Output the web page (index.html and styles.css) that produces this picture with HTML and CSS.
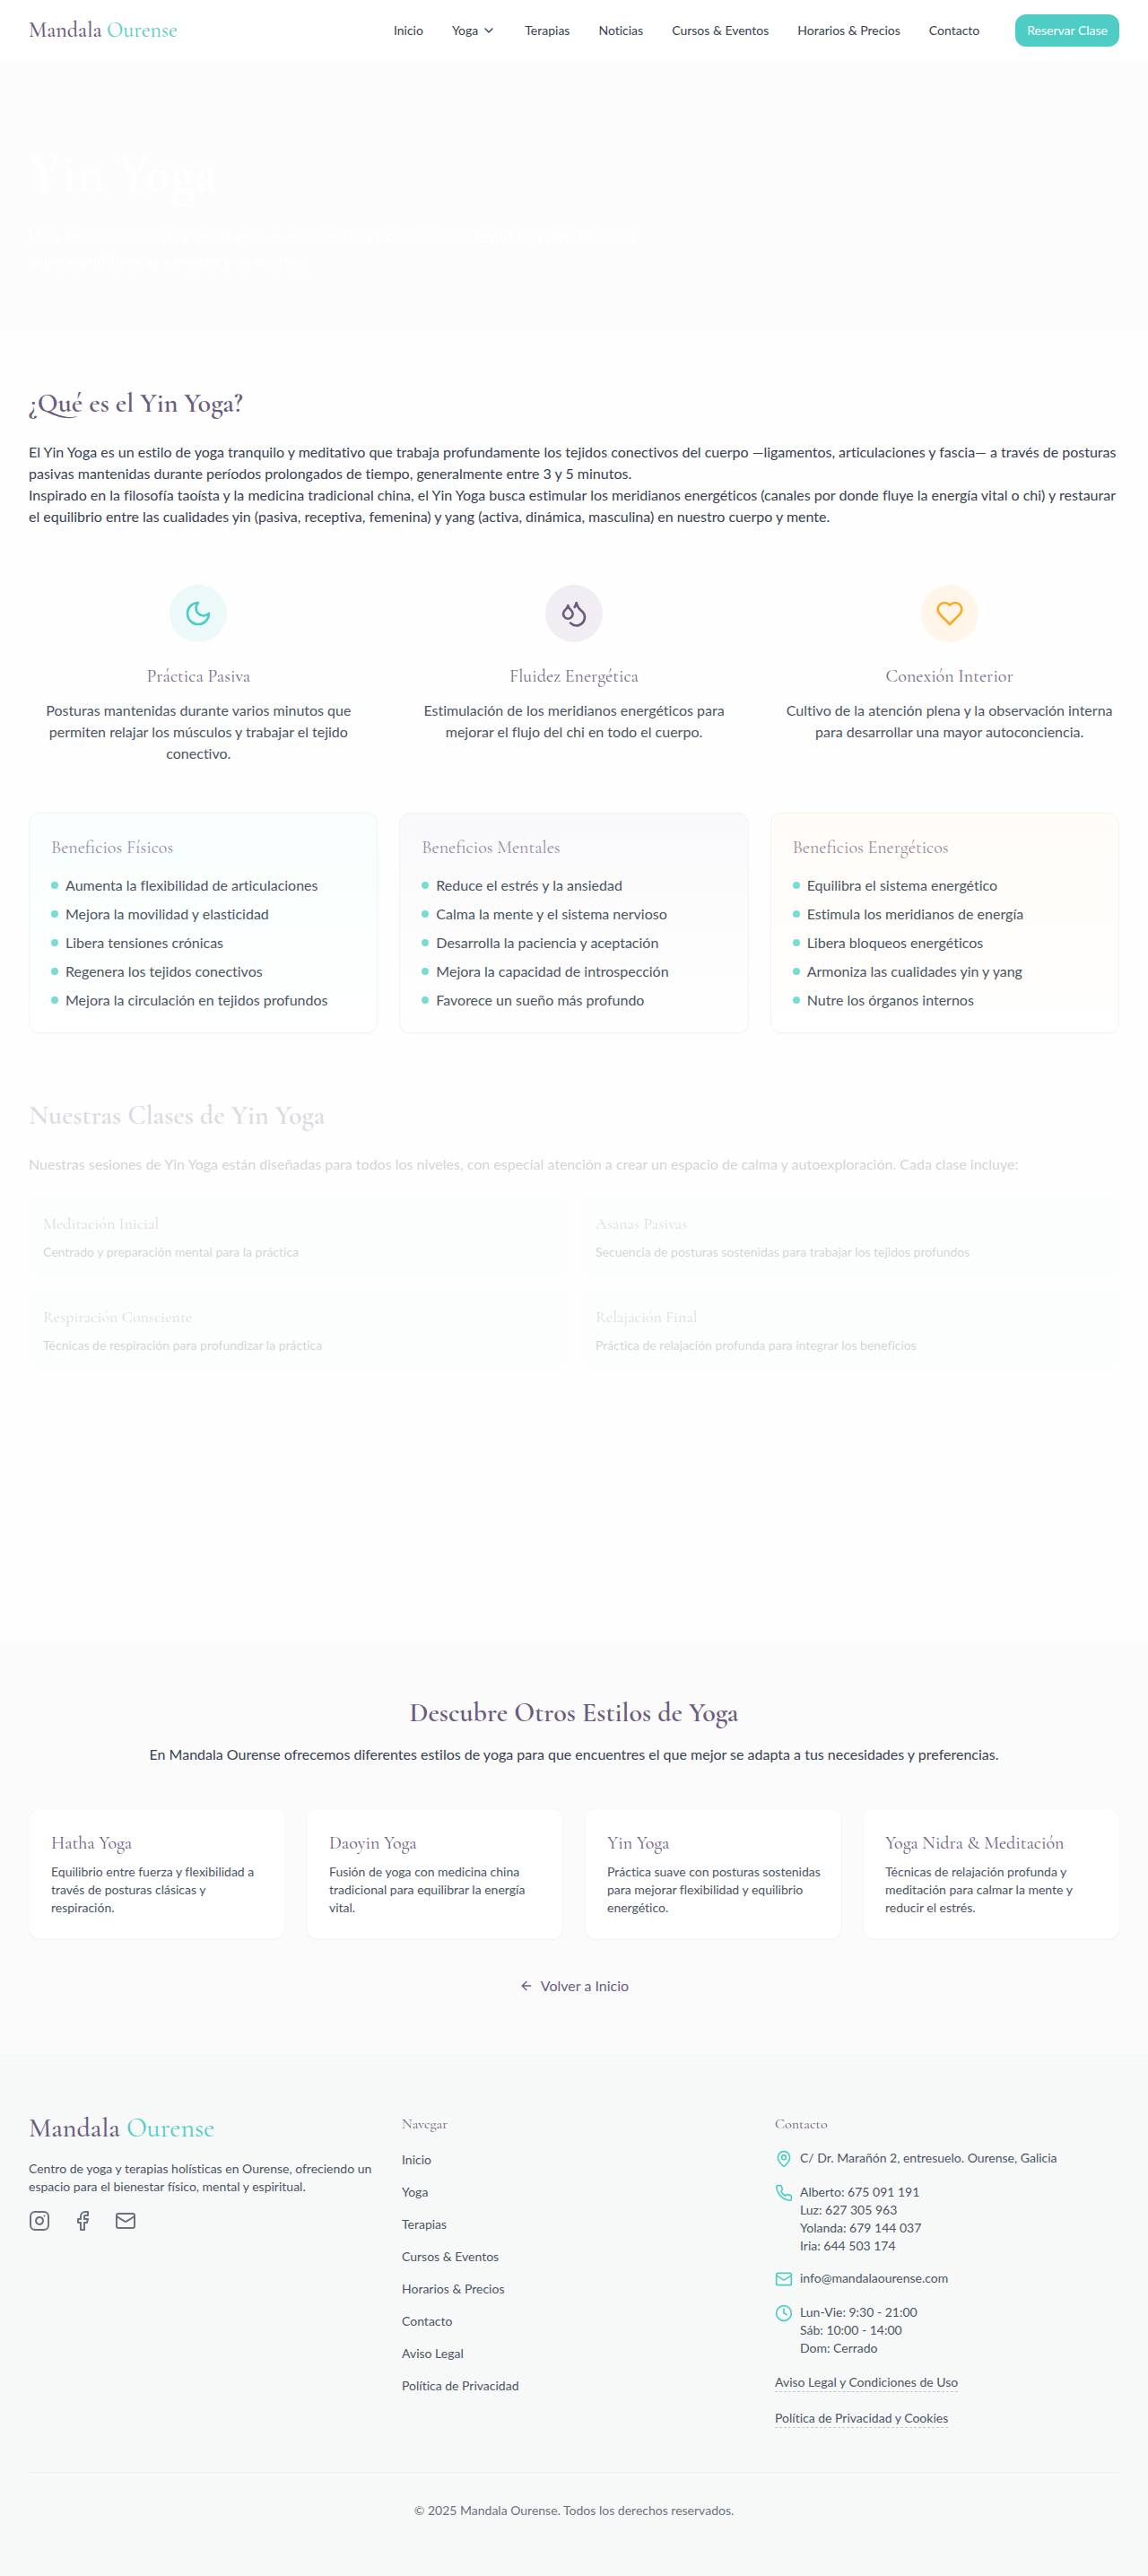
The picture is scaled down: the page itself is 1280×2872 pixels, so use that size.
FILE: index.html
```html
<!DOCTYPE html>
<html lang="es">
<head>
<meta charset="utf-8">
<meta name="viewport" content="width=device-width, initial-scale=1">
<title>Yin Yoga | Mandala Ourense</title>
<link rel="stylesheet" href="styles.css">
</head>
<body>
<header class="site-header">
  <a class="logo" href="#"><span class="logo-main">Mandala</span> <span class="logo-accent">Ourense</span></a>
  <nav class="main-nav" aria-label="Principal">
    <a href="#">Inicio</a>
    <button class="nav-toggle" type="button">Yoga
      <svg class="icon icon-sm" viewBox="0 0 24 24"><path d="m6 9 6 6 6-6"/></svg>
    </button>
    <a href="#">Terapias</a>
    <a href="#">Noticias</a>
    <a href="#">Cursos &amp; Eventos</a>
    <a href="#">Horarios &amp; Precios</a>
    <a href="#">Contacto</a>
    <button class="cta" type="button">Reservar Clase</button>
  </nav>
</header>

<main>
  <section class="hero">
    <h1>Yin Yoga</h1>
    <p>Una práctica suave y profunda que combina posturas sostenidas y meditación para equilibrar el cuerpo y la mente.</p>
  </section>

  <section class="about">
    <h2>¿Qué es el Yin Yoga?</h2>
    <p>El Yin Yoga es un estilo de yoga tranquilo y meditativo que trabaja profundamente los tejidos conectivos del cuerpo —ligamentos, articulaciones y fascia— a través de posturas pasivas mantenidas durante períodos prolongados de tiempo, generalmente entre 3 y 5 minutos.</p>
    <p>Inspirado en la filosofía taoísta y la medicina tradicional china, el Yin Yoga busca estimular los meridianos energéticos (canales por donde fluye la energía vital o chi) y restaurar el equilibrio entre las cualidades yin (pasiva, receptiva, femenina) y yang (activa, dinámica, masculina) en nuestro cuerpo y mente.</p>

    <div class="features">
      <div class="feature">
        <div class="feature-icon teal"><svg class="icon icon-lg" viewBox="0 0 24 24"><path d="M12 3a6 6 0 0 0 9 9 9 9 0 1 1-9-9Z"/></svg></div>
        <h3>Práctica Pasiva</h3>
        <p>Posturas mantenidas durante varios minutos que permiten relajar los músculos y trabajar el tejido conectivo.</p>
      </div>
      <div class="feature">
        <div class="feature-icon purple"><svg class="icon icon-lg" viewBox="0 0 24 24"><path d="M7 16.300c2.200 0 4-1.830 4-4.050 0-1.160-.57-2.260-1.710-3.190S7.290 6.750 7 5.300c-.29 1.450-1.140 2.840-2.290 3.760S3 11.100 3 12.250c0 2.220 1.800 4.050 4 4.050z"/><path d="M12.560 6.600A10.970 10.970 0 0 0 14 3.020c.5 2.500 2 4.900 4 6.500s3 3.500 3 5.500a6.980 6.980 0 0 1-11.910 4.970"/></svg></div>
        <h3>Fluidez Energética</h3>
        <p>Estimulación de los meridianos energéticos para mejorar el flujo del chi en todo el cuerpo.</p>
      </div>
      <div class="feature">
        <div class="feature-icon orange"><svg class="icon icon-lg" viewBox="0 0 24 24"><path d="M19 14c1.490-1.460 3-3.210 3-5.500A5.500 5.500 0 0 0 16.500 3c-1.760 0-3 .5-4.500 2-1.500-1.500-2.740-2-4.500-2A5.500 5.500 0 0 0 2 8.500c0 2.300 1.500 4.050 3 5.500l7 7Z"/></svg></div>
        <h3>Conexión Interior</h3>
        <p>Cultivo de la atención plena y la observación interna para desarrollar una mayor autoconciencia.</p>
      </div>
    </div>

    <div class="benefits">
      <div class="benefit physical">
        <h3>Beneficios Físicos</h3>
        <ul>
          <li>Aumenta la flexibilidad de articulaciones</li>
          <li>Mejora la movilidad y elasticidad</li>
          <li>Libera tensiones crónicas</li>
          <li>Regenera los tejidos conectivos</li>
          <li>Mejora la circulación en tejidos profundos</li>
        </ul>
      </div>
      <div class="benefit mental">
        <h3>Beneficios Mentales</h3>
        <ul>
          <li>Reduce el estrés y la ansiedad</li>
          <li>Calma la mente y el sistema nervioso</li>
          <li>Desarrolla la paciencia y aceptación</li>
          <li>Mejora la capacidad de introspección</li>
          <li>Favorece un sueño más profundo</li>
        </ul>
      </div>
      <div class="benefit energetic">
        <h3>Beneficios Energéticos</h3>
        <ul>
          <li>Equilibra el sistema energético</li>
          <li>Estimula los meridianos de energía</li>
          <li>Libera bloqueos energéticos</li>
          <li>Armoniza las cualidades yin y yang</li>
          <li>Nutre los órganos internos</li>
        </ul>
      </div>
    </div>

    <div class="classes">
      <h2>Nuestras Clases de Yin Yoga</h2>
      <p>Nuestras sesiones de Yin Yoga están diseñadas para todos los niveles, con especial atención a crear un espacio de calma y autoexploración. Cada clase incluye:</p>
      <div class="class-grid">
        <div class="class-card"><h4>Meditación Inicial</h4><p>Centrado y preparación mental para la práctica</p></div>
        <div class="class-card"><h4>Asanas Pasivas</h4><p>Secuencia de posturas sostenidas para trabajar los tejidos profundos</p></div>
        <div class="class-card"><h4>Respiración Consciente</h4><p>Técnicas de respiración para profundizar la práctica</p></div>
        <div class="class-card"><h4>Relajación Final</h4><p>Práctica de relajación profunda para integrar los beneficios</p></div>
      </div>
    </div>
  </section>

  <section class="styles">
    <h2>Descubre Otros Estilos de Yoga</h2>
    <p class="styles-intro">En Mandala Ourense ofrecemos diferentes estilos de yoga para que encuentres el que mejor se adapta a tus necesidades y preferencias.</p>
    <div class="style-grid">
      <a class="style-card" href="#"><h3>Hatha Yoga</h3><p>Equilibrio entre fuerza y flexibilidad a través de posturas clásicas y respiración.</p></a>
      <a class="style-card" href="#"><h3>Daoyin Yoga</h3><p>Fusión de yoga con medicina china tradicional para equilibrar la energía vital.</p></a>
      <a class="style-card" href="#"><h3>Yin Yoga</h3><p>Práctica suave con posturas sostenidas para mejorar flexibilidad y equilibrio energético.</p></a>
      <a class="style-card" href="#"><h3>Yoga Nidra &amp; Meditación</h3><p>Técnicas de relajación profunda y meditación para calmar la mente y reducir el estrés.</p></a>
    </div>
    <a class="back-link" href="#">
      <svg class="icon icon-sm" viewBox="0 0 24 24"><path d="m12 19-7-7 7-7"/><path d="M19 12H5"/></svg>
      Volver a Inicio
    </a>
  </section>
</main>

<footer class="site-footer">
  <div class="footer-grid">
    <div class="footer-brand">
      <a class="logo logo-lg" href="#"><span class="logo-main">Mandala</span> <span class="logo-accent">Ourense</span></a>
      <p>Centro de yoga y terapias holísticas en Ourense, ofreciendo un espacio para el bienestar físico, mental y espiritual.</p>
      <div class="social">
        <a href="#" aria-label="Instagram"><svg class="icon icon-md" viewBox="0 0 24 24"><rect width="20" height="20" x="2" y="2" rx="5"/><path d="M16 11.370A4 4 0 1 1 12.630 8 4 4 0 0 1 16 11.370z"/><path d="M17.500 6.500h.01"/></svg></a>
        <a href="#" aria-label="Facebook"><svg class="icon icon-md" viewBox="0 0 24 24"><path d="M18 2h-3a5 5 0 0 0-5 5v3H7v4h3v8h4v-8h3l1-4h-4V7a1 1 0 0 1 1-1h3z"/></svg></a>
        <a href="#" aria-label="Correo"><svg class="icon icon-md" viewBox="0 0 24 24"><rect width="20" height="16" x="2" y="4" rx="2"/><path d="m22 7-8.970 5.700a1.940 1.940 0 0 1-2.060 0L2 7"/></svg></a>
      </div>
    </div>
    <div>
      <h4>Navegar</h4>
      <ul class="footer-links">
        <li><a href="#">Inicio</a></li>
        <li><a href="#">Yoga</a></li>
        <li><a href="#">Terapias</a></li>
        <li><a href="#">Cursos &amp; Eventos</a></li>
        <li><a href="#">Horarios &amp; Precios</a></li>
        <li><a href="#">Contacto</a></li>
        <li><a href="#">Aviso Legal</a></li>
        <li><a href="#">Política de Privacidad</a></li>
      </ul>
    </div>
    <div>
      <h4>Contacto</h4>
      <ul class="contact">
        <li class="contact-item"><svg class="icon icon-base" viewBox="0 0 24 24"><path d="M20 10c0 4.993-5.539 10.193-7.399 11.799a1 1 0 0 1-1.202 0C9.539 20.193 4 14.993 4 10a8 8 0 0 1 16 0"/><circle cx="12" cy="10" r="3"/></svg><span>C/ Dr. Marañón 2, entresuelo. Ourense, Galicia</span></li>
        <li class="contact-item"><svg class="icon icon-base" viewBox="0 0 24 24"><path d="M22 16.920v3a2 2 0 0 1-2.180 2 19.790 19.790 0 0 1-8.630-3.070 19.500 19.500 0 0 1-6-6 19.790 19.790 0 0 1-3.070-8.670A2 2 0 0 1 4.110 2h3a2 2 0 0 1 2 1.720 12.840 12.840 0 0 0 .7 2.810 2 2 0 0 1-.45 2.110L8.090 9.910a16 16 0 0 0 6 6l1.270-1.270a2 2 0 0 1 2.110-.45 12.840 12.840 0 0 0 2.810.7A2 2 0 0 1 22 16.920z"/></svg><span>Alberto: 675 091 191<br>Luz: 627 305 963<br>Yolanda: 679 144 037<br>Iria: 644 503 174</span></li>
        <li class="contact-item"><svg class="icon icon-base" viewBox="0 0 24 24"><rect width="20" height="16" x="2" y="4" rx="2"/><path d="m22 7-8.970 5.700a1.940 1.940 0 0 1-2.060 0L2 7"/></svg><a href="#">info@mandalaourense.com</a></li>
        <li class="contact-item"><svg class="icon icon-base" viewBox="0 0 24 24"><circle cx="12" cy="12" r="10"/><path d="M12 6v6l4 2"/></svg><span>Lun-Vie: 9:30 - 21:00<br>Sáb: 10:00 - 14:00<br>Dom: Cerrado</span></li>
        <li><a class="legal" href="#">Aviso Legal y Condiciones de Uso</a></li>
        <li><a class="legal" href="#">Política de Privacidad y Cookies</a></li>
      </ul>
    </div>
  </div>
  <p class="copyright">© 2025 Mandala Ourense. Todos los derechos reservados.</p>
</footer>
</body>
</html>
```
FILE: styles.css
```css
:root {
  --teal: #4ecdc4;
  --purple: #6b5b7e;
  --orange: #ffa726;
  --ink: #374151;
  --ink-soft: #4b5563;
  --ink-muted: #6b7280;
  --serif: "Cormorant Garamond", "Liberation Serif", serif;
  --sans: Lato, sans-serif;
}

* { box-sizing: border-box; }

body {
  margin: 0;
  background: #fefefe;
  color: var(--ink);
  font-family: var(--sans);
  font-size: 16px;
  font-variant-ligatures: none;
  line-height: 24px;
}

h1, h2, h3, h4, p, ul { margin: 0; padding: 0; }
ul { list-style: none; }
a { color: inherit; text-decoration: none; }
button { border: 0; padding: 0; background: none; color: inherit; font: inherit; cursor: pointer; }

h2, h3, h4 { font-family: var(--serif); font-weight: 400; font-variant-ligatures: normal; color: var(--purple); }
h2 { font-size: 30px; font-weight: 600; line-height: 36px; }
h3 { font-size: 20px; line-height: 28px; }

.icon { display: block; flex: none; fill: none; stroke: currentColor; stroke-width: 2; stroke-linecap: round; stroke-linejoin: round; }
.icon-sm { width: 16px; height: 16px; }
.icon-base { width: 20px; height: 20px; }
.icon-md { width: 24px; height: 24px; }
.icon-lg { width: 32px; height: 32px; }

/* Header */
.site-header { display: flex; align-items: center; justify-content: space-between; padding: 16px 32px; background: #fff; }
.logo { font-family: var(--serif); font-size: 24px; line-height: 32px; }
.logo-main { color: var(--purple); font-weight: 500; }
.logo-accent { color: var(--teal); }
.main-nav { display: flex; align-items: center; gap: 32px; font-size: 14px; line-height: 20px; }
.nav-toggle { display: flex; align-items: center; gap: 4px; }
.cta { margin-left: 8px; padding: 8px 13px; border-radius: 12px; background: var(--teal); color: #fff; }

/* Hero */
.hero { padding: 96px 32px 64px; background: #fcfcfc; color: #fff; }
.hero h1 { margin-bottom: 24px; font-family: var(--serif); font-size: 60px; font-weight: 700; line-height: 60px; }
.hero p { max-width: 688px; font-size: 20px; line-height: 28px; }

/* About */
.about { padding: 64px 32px 302px; }
.about > h2, .classes > h2 { margin-bottom: 24px; }

.features { display: grid; grid-template-columns: repeat(3, 1fr); gap: 40px; margin-top: 64px; text-align: center; }
.feature-icon { display: flex; align-items: center; justify-content: center; width: 64px; height: 64px; margin: 0 auto 24px; border-radius: 50%; }
.feature-icon.teal { background: #edf9f9; color: var(--teal); }
.feature-icon.purple { background: #f0eef2; color: var(--purple); }
.feature-icon.orange { background: #fff6e9; color: var(--orange); }
.feature h3 { margin-bottom: 12px; opacity: .9; }
.feature p { color: var(--ink-soft); }

.benefits { display: grid; grid-template-columns: repeat(3, 1fr); gap: 24px; margin-top: 54px; }
.benefit { padding: 24px; border: 1px solid #f3f4f6; border-radius: 12px; box-shadow: 0 1px 2px rgba(0, 0, 0, .03); }
.benefit.physical { background: linear-gradient(#f8fffe, #fff); }
.benefit.mental { background: linear-gradient(#f9f9fb, #fff); }
.benefit.energetic { background: linear-gradient(#fffcf7, #fff); }
.benefit h3 { margin-bottom: 16px; opacity: .7; }
.benefit ul { display: grid; gap: 8px; }
.benefit li { display: flex; align-items: center; gap: 8px; color: var(--ink-soft); }
.benefit li::before { content: ""; flex: none; width: 8px; height: 8px; border-radius: 50%; background: #7adbd4; }

.classes { margin-top: 74px; opacity: .22; }
.class-grid { display: grid; grid-template-columns: repeat(2, 1fr); gap: 16px; margin-top: 24px; }
.class-card { padding: 16px; border-radius: 12px; background: #f8fffe; }
.class-card h4 { margin-bottom: 8px; font-size: 18px; line-height: 28px; }
.class-card p { font-size: 14px; line-height: 20px; }

/* Other styles */
.styles { padding: 64px 32px; background: #fbfbfb; text-align: center; }
.styles h2 { margin-bottom: 16px; }
.style-grid { display: grid; grid-template-columns: repeat(4, 1fr); gap: 24px; margin: 48px 0 40px; text-align: left; }
.style-card { padding: 24px 20px 24px 24px; border: 1px solid #f9f9f9; border-radius: 12px; background: #fff; box-shadow: 0 1px 2px rgba(0, 0, 0, .04); }
.style-card h3 { margin-bottom: 8px; }
.style-card p { color: var(--ink-soft); font-size: 14px; line-height: 20px; }
.back-link { display: flex; align-items: center; justify-content: center; gap: 8px; color: var(--purple); }

/* Footer */
.site-footer { padding: 64px 32px; background: #f7f9f9; color: var(--ink-soft); font-size: 14px; line-height: 20px; }
.footer-grid { display: grid; grid-template-columns: repeat(3, 1fr); gap: 32px; }
.footer-grid h4 { margin-bottom: 14px; font-size: 16px; line-height: 28px; }
.logo-lg { display: block; margin-bottom: 16px; font-size: 30px; line-height: 38px; }
.social { display: flex; gap: 24px; margin-top: 16px; color: var(--ink-muted); }
.footer-links { display: grid; gap: 12px; line-height: 24px; }
.contact { display: grid; gap: 16px; }
.contact li { line-height: 24px; }
.contact .contact-item { display: flex; gap: 8px; min-height: 22px; line-height: 20px; }
.contact .icon { margin-top: 1px; color: var(--teal); }
.legal { padding-bottom: 2px; border-bottom: 1px dashed #c4c8d0; }
.copyright { margin-top: 48px; padding-top: 32px; border-top: 1px solid #eceeef; color: var(--ink-muted); text-align: center; }
```
